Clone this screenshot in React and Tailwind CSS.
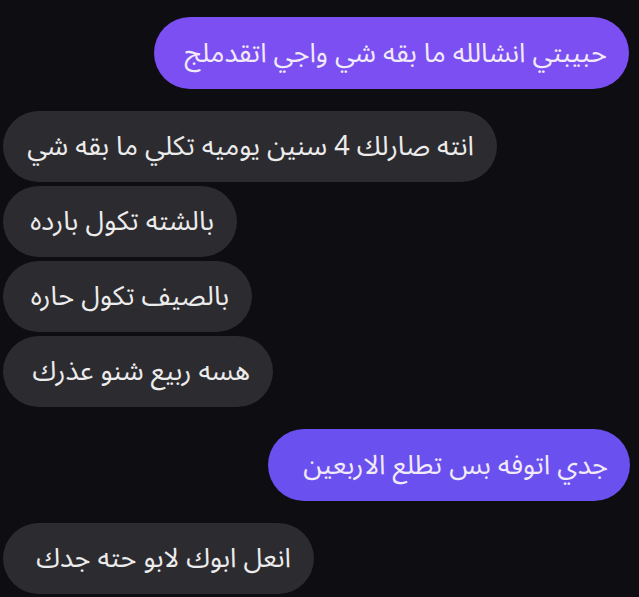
export default function App() {
  const gray = "h-[71px] flex items-center rounded-full bg-[#2c2b30] text-[#ececec] pl-[22px] pr-[23px] self-end";
  const purple = "h-[72px] flex items-center rounded-full text-[#f1eaf7] px-[22px] self-start";
  return (
    <div dir="rtl" className="w-[639px] h-[597px] overflow-hidden bg-[#0e0d11] flex flex-col pt-[17px] pr-[10px] pl-[3px] text-[27px] font-['Noto_Sans_Arabic','DejaVu_Sans',sans-serif] leading-none">
      <div className={purple + " bg-[#7b4ff1] w-[475px]"}>حبيبتي انشالله ما بقه شي واجي اتقدملج</div>
      <div className="flex flex-col gap-[4px] mt-[22px]">
        <div className={gray + " w-[494px]"}>انته صارلك 4 سنين يوميه تكلي ما بقه شي</div>
        <div className={gray + " w-[234px]"}>بالشته تكول بارده</div>
        <div className={gray + " w-[249px]"}>بالصيف تكول حاره</div>
        <div className={gray + " w-[270px]"}>هسه ربيع شنو عذرك</div>
      </div>
      <div className={purple + " bg-[#6a50ef] mt-[22px] mr-[-1px] w-[362px]"}>جدي اتوفه بس تطلع الاربعين</div>
      <div className={gray + " mt-[22px] w-[311px]"}>انعل ابوك لابو حته جدك</div>
    </div>
  );
}
